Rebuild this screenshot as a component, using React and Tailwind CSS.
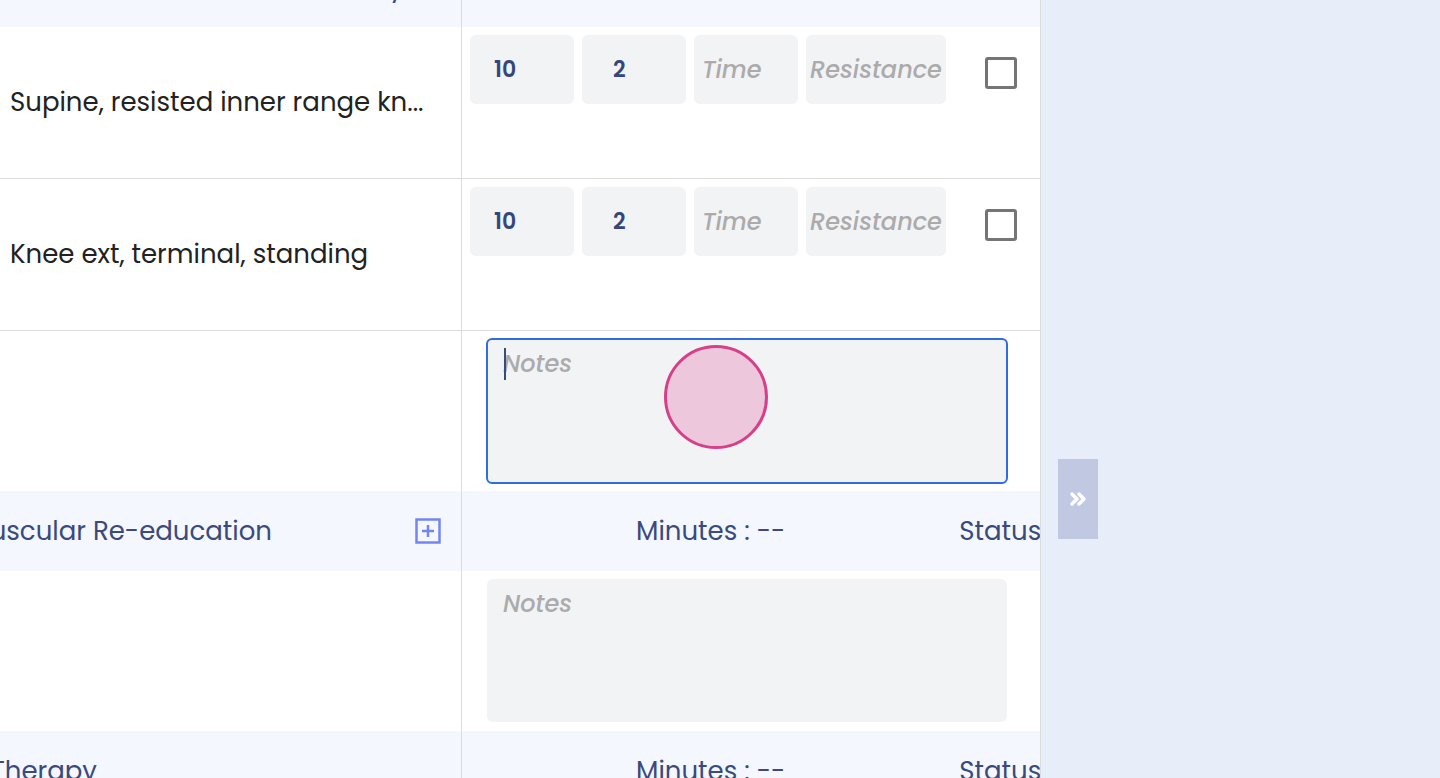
import React from "react";
import { ChevronsRight } from "lucide-react";

function PlusSquare() {
  return (
    <svg width="26" height="26" viewBox="0 0 26 26" fill="none">
      <rect x="1.5" y="1.5" width="23" height="23" stroke="#7286f3" strokeWidth="2.5" />
      <path d="M13 7v12M7 13h12" stroke="#7286f3" strokeWidth="2.5" />
    </svg>
  );
}

function SectionHeader({ label, labelEnd, showIcon = true, showMeta = true }) {
  return (
    <div className="flex h-[80px] shrink-0 bg-[#f4f7fd]">
      <div className="flex w-[462px] shrink-0 items-center border-r border-[#dcdcdc]">
        <div
          className="flex shrink-0 justify-end overflow-hidden whitespace-nowrap text-[26px] text-[#3b4a7c]"
          style={{ width: labelEnd }}
        >
          <span className="shrink-0">{label}</span>
        </div>
        {showIcon && (
          <div className="ml-auto mr-[20px] flex">
            <PlusSquare />
          </div>
        )}
      </div>
      <div className="flex flex-1 items-center gap-[174px] overflow-hidden whitespace-nowrap pl-[174px] text-[26px] text-[#3b4a7c]">
        {showMeta && (
          <>
            <span className="shrink-0">Minutes : --</span>
            <span className="shrink-0">Status</span>
          </>
        )}
      </div>
    </div>
  );
}

function ExerciseRow({ name, reps, sets, repsPad, setsPad }) {
  return (
    <div className="flex h-[152px] shrink-0 border-b border-[#dcdcdc] bg-white">
      <div className="flex w-[462px] shrink-0 items-center border-r border-[#dcdcdc] pl-[10px]">
        <span className="whitespace-nowrap text-[26px] text-[#222222]">{name}</span>
      </div>
      <div className="flex flex-1 items-start pl-[8px] pt-[8px]">
        <div className="flex gap-[8px]">
          <div className="flex h-[69px] w-[104px] items-center rounded-[6px] bg-[#f2f3f5] text-[22px] font-semibold text-[#34467c]" style={{ paddingLeft: repsPad }}>
            {reps}
          </div>
          <div className="flex h-[69px] w-[104px] items-center rounded-[6px] bg-[#f2f3f5] text-[22px] font-semibold text-[#34467c]" style={{ paddingLeft: setsPad }}>
            {sets}
          </div>
          <div className="flex h-[69px] w-[104px] items-center overflow-hidden rounded-[6px] bg-[#f2f3f5] pl-[8px] text-[24px] font-medium italic text-[#ababab]">
            Time
          </div>
          <div className="flex h-[69px] w-[140px] items-center overflow-hidden whitespace-nowrap rounded-[6px] bg-[#f2f3f5] pl-[4px] text-[24px] font-medium italic text-[#ababab]">
            Resistance
          </div>
        </div>
        <div className="ml-[39px] mt-[22px] h-[32px] w-[32px] shrink-0 rounded-[3px] border-[3px] border-[#757575] bg-white" />
      </div>
    </div>
  );
}

function NotesRow({ focused }) {
  return (
    <div className="flex h-[160px] shrink-0 bg-white">
      <div className="w-[462px] shrink-0 border-r border-[#dcdcdc]" />
      <div className={focused ? "relative flex-1 pl-[24px] pt-[7px]" : "relative flex-1 pl-[25px] pt-[8px]"}>
        <textarea
          placeholder="Notes"
          className={
            focused
              ? "h-[146px] w-[522px] resize-none rounded-[6px] border-2 border-[#2f6de1] bg-[#f2f3f5] px-[15px] pt-[6px] text-[24px] font-medium italic outline-none placeholder:text-[#ababab]"
              : "h-[143px] w-[520px] resize-none rounded-[6px] bg-[#f2f3f5] px-[16px] pt-[7px] text-[24px] font-medium italic outline-none placeholder:text-[#ababab]"
          }
        />
        {focused && (
          <>
            <span className="absolute left-[42px] top-[17px] h-[32px] w-[2px] bg-[#3b4a7c]" />
            <span className="absolute left-[202px] top-[14px] h-[104px] w-[104px] rounded-full border-[3px] border-[#d6408a] bg-[#edc8dc]" />
          </>
        )}
      </div>
    </div>
  );
}

export default function App() {
  return (
    <div className="flex h-[778px] w-[1440px] overflow-hidden bg-[#e8eef9] font-['Poppins','Open_Sans',sans-serif]">
      <div className="flex w-[1041px] shrink-0 flex-col border-r border-[#dcdcdc] bg-white">
        <div className="mt-[-53px] flex flex-col">
          <SectionHeader label="Functional Activity" labelEnd="404px" showIcon={false} showMeta={false} />
          <ExerciseRow name="Supine, resisted inner range kn..." reps="10" sets="2" repsPad="24px" setsPad="31px" />
          <ExerciseRow name="Knee ext, terminal, standing" reps="10" sets="2" repsPad="24px" setsPad="31px" />
          <NotesRow focused />
          <SectionHeader label="Neuromuscular Re-education" labelEnd="272px" />
          <NotesRow />
          <SectionHeader label="Manual Therapy" labelEnd="97px" showIcon={false} />
        </div>
      </div>
      <div className="flex-1 pl-[17px] pt-[459px]">
        <div className="flex h-[80px] w-[40px] items-center justify-center bg-[#c0c8e2]">
          <ChevronsRight size={24} strokeWidth={3.5} color="#ffffff" />
        </div>
      </div>
    </div>
  );
}
